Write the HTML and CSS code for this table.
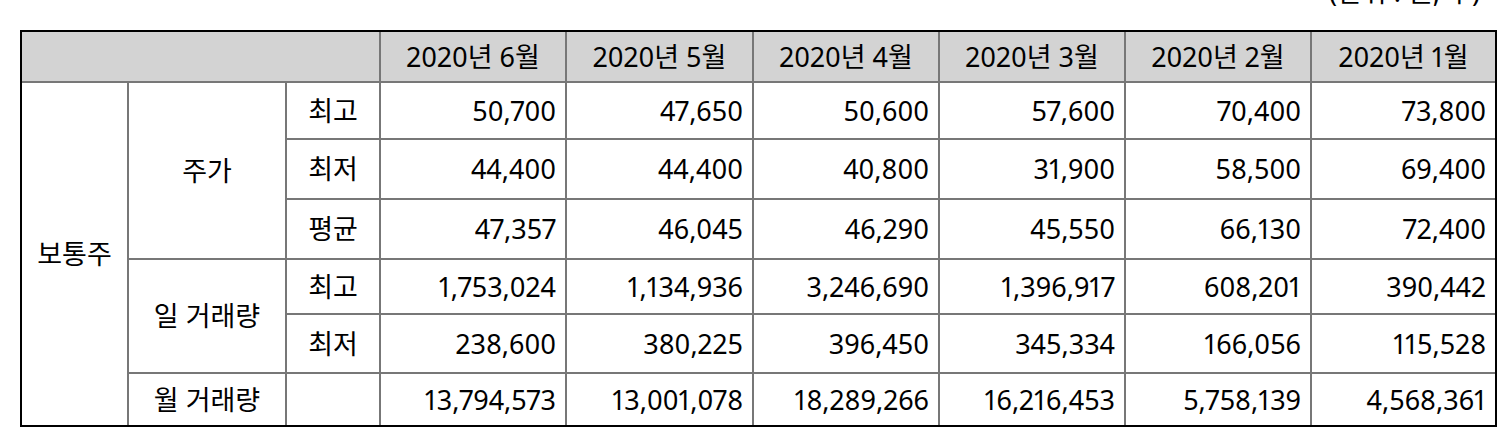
FILE: index.html
```html
<!DOCTYPE html>
<html lang="ko">
<head>
<meta charset="utf-8">
<title>주가 및 거래량</title>
<link rel="stylesheet" href="styles.css">
</head>
<body>
<div class="page">
  <div class="unit">(단위 : 원, 주)</div>
  <table class="stock">
    <colgroup>
      <col class="c1"><col class="c2"><col class="c3">
      <col class="cd"><col class="cd2"><col class="cd"><col class="cd"><col class="cd"><col class="cdl">
    </colgroup>
    <thead>
      <tr class="r-head">
        <th colspan="3" class="blank"></th>
        <th>2020년 6월</th>
        <th>2020년 5월</th>
        <th>2020년 4월</th>
        <th>2020년 3월</th>
        <th>2020년 2월</th>
        <th>2020년 1월</th>
      </tr>
    </thead>
    <tbody>
      <tr class="r1">
        <td rowspan="6" class="lbl bottom">보통주</td>
        <td rowspan="3" class="lbl">주가</td>
        <td class="lbl">최고</td>
        <td class="num">50,700</td><td class="num">47,650</td><td class="num">50,600</td><td class="num">57,600</td><td class="num">70,400</td><td class="num">73,800</td>
      </tr>
      <tr class="r2">
        <td class="lbl">최저</td>
        <td class="num">44,400</td><td class="num">44,400</td><td class="num">40,800</td><td class="num">31,900</td><td class="num">58,500</td><td class="num">69,400</td>
      </tr>
      <tr class="r3">
        <td class="lbl">평균</td>
        <td class="num">47,357</td><td class="num">46,045</td><td class="num">46,290</td><td class="num">45,550</td><td class="num">66,130</td><td class="num">72,400</td>
      </tr>
      <tr class="r4">
        <td rowspan="2" class="lbl">일 거래량</td>
        <td class="lbl">최고</td>
        <td class="num">1,753,024</td><td class="num">1,134,936</td><td class="num">3,246,690</td><td class="num">1,396,917</td><td class="num">608,201</td><td class="num">390,442</td>
      </tr>
      <tr class="r5">
        <td class="lbl">최저</td>
        <td class="num">238,600</td><td class="num">380,225</td><td class="num">396,450</td><td class="num">345,334</td><td class="num">166,056</td><td class="num">115,528</td>
      </tr>
      <tr class="r6 last">
        <td class="lbl">월 거래량</td>
        <td class="lbl"></td>
        <td class="num">13,794,573</td><td class="num">13,001,078</td><td class="num">18,289,266</td><td class="num">16,216,453</td><td class="num">5,758,139</td><td class="num">4,568,361</td>
      </tr>
    </tbody>
  </table>
</div>
</body>
</html>
```

FILE: styles.css
```css
html, body {
  margin: 0;
  padding: 0;
  background: #ffffff;
}

body {
  font-family: "Noto Sans", "Noto Sans CJK KR", sans-serif;
  font-size: 27px;
  font-feature-settings: "pnum";
  font-variant-numeric: proportional-nums;
  color: #000000;
}

.page {
  padding-left: 20px;
  width: 1477px;
}

.unit {
  text-align: right;
  padding-right: 17px;
  line-height: 30px;
  height: 30px;
  margin-top: -23px;
  margin-bottom: 23px;
  white-space: nowrap;
}

.stock {
  width: 1477px;
  table-layout: fixed;
  border-collapse: separate;
  border-spacing: 0;
  border: 2px solid #000000;
}

.c1 { width: 107px; }
.c2 { width: 158px; }
.c3 { width: 94px; }
.cd { width: 186px; }
.cd2 { width: 187px; }
.cdl { width: 183px; }

.stock th,
.stock td {
  box-sizing: border-box;
  border-right: 2px solid #777777;
  border-bottom: 2px solid #777777;
  padding: 0 9px;
  line-height: 30px;
  font-weight: normal;
  white-space: nowrap;
}

.stock tr > :last-child {
  border-right: none;
}

.stock tr.last > td,
.stock td.bottom {
  border-bottom: none;
}

.stock th {
  background: #d3d3d3;
  text-align: center;
}

.lbl {
  text-align: center;
}

.num {
  text-align: right;
}

.r-head { height: 51px; }
.r1 { height: 57px; }
.r2 { height: 60px; }
.r3 { height: 60px; }
.r4 { height: 55px; }
.r5 { height: 59px; }
.r6 { height: 51px; }
```
